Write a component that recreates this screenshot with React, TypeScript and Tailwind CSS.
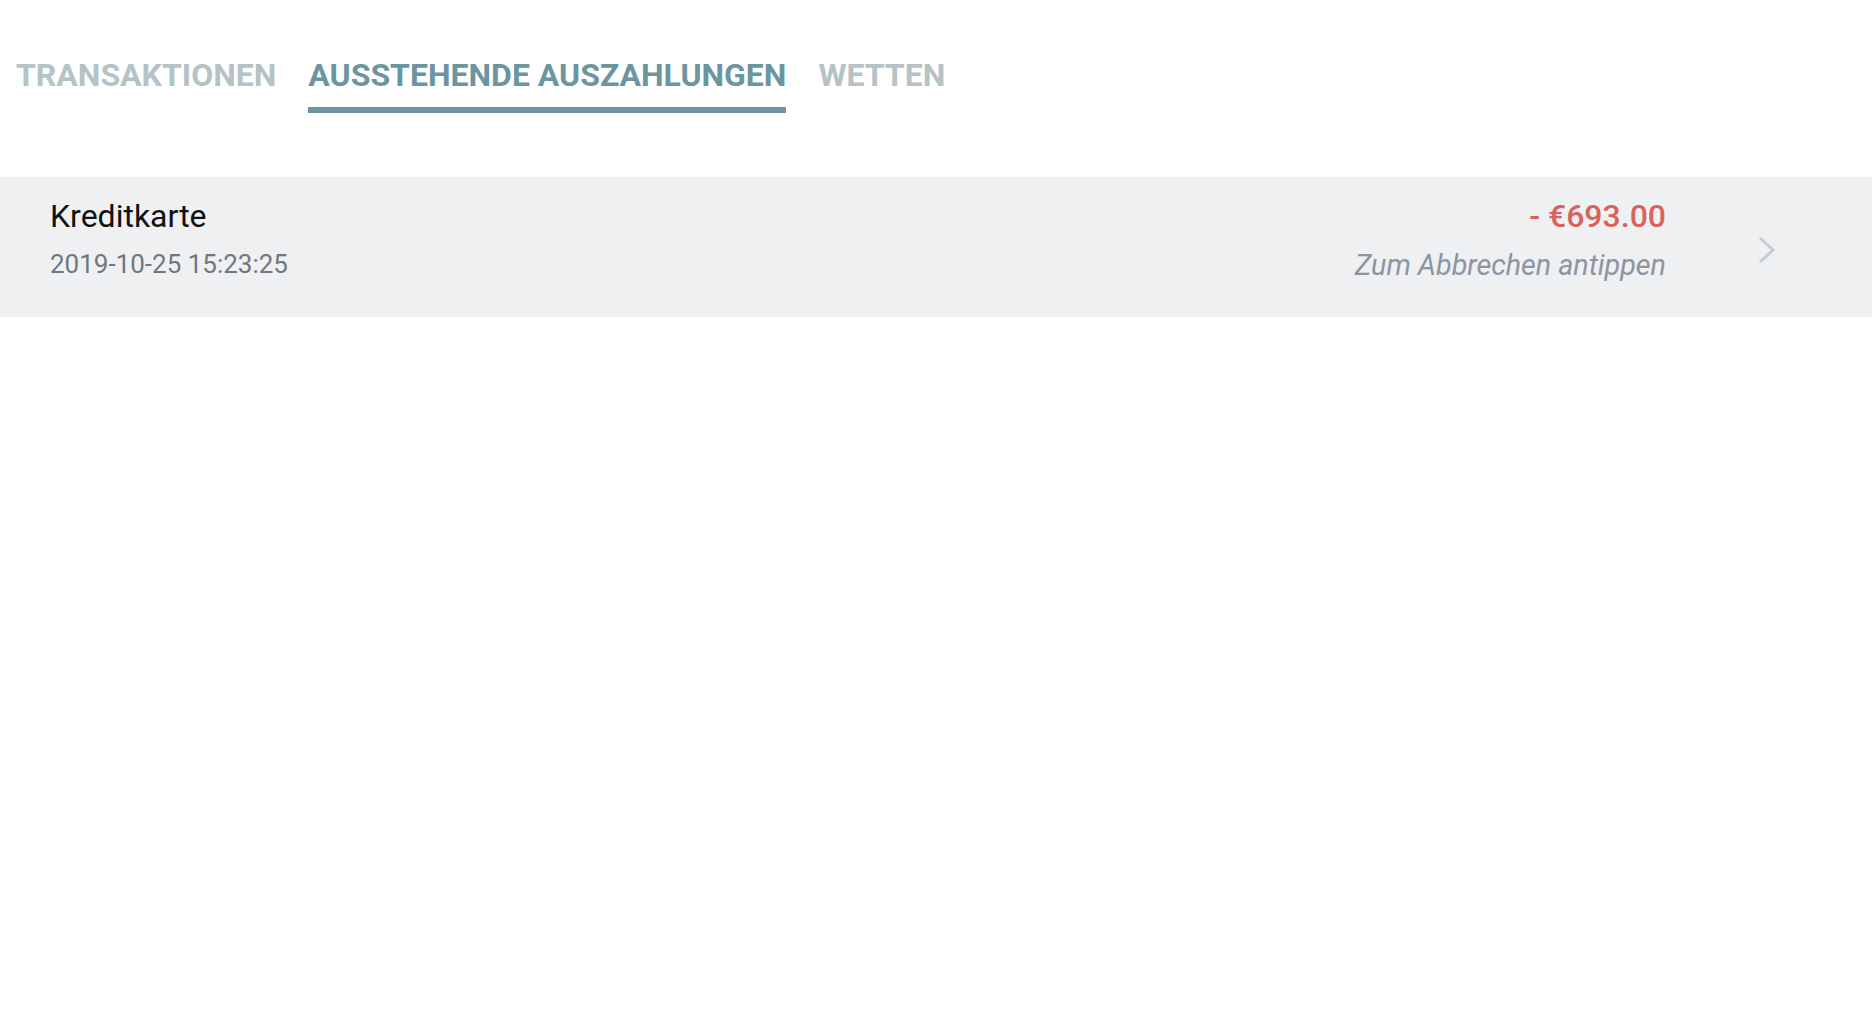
import React from 'react';

const tabs = [
  { label: 'TRANSAKTIONEN', active: false },
  { label: 'AUSSTEHENDE AUSZAHLUNGEN', active: true },
  { label: 'WETTEN', active: false },
];

const payouts = [
  { method: 'Kreditkarte', date: '2019-10-25 15:23:25', amount: '- €693.00' },
];

export default function App() {
  return (
    <div className="min-h-screen bg-white font-['Roboto',sans-serif]">
      {/* Tabs */}
      <div className="flex gap-[32px] pl-[16px] pt-[56px]">
        {tabs.map((t) => (
          <div
            key={t.label}
            className={`pb-[13px] text-[32px] font-bold leading-[38px] ${
              t.active ? 'border-b-[6px] border-[#6b95a1] text-[#6b95a1]' : 'border-b-[6px] border-transparent text-[#b5c2c6]'
            }`}
          >
            {t.label}
          </div>
        ))}
      </div>

      {/* Pending payouts */}
      <div className="mt-[64px]">
        {payouts.map((p) => (
          <div key={p.date} className="flex h-[140px] bg-[#eff0f2] pl-[50px]">
            <div className="flex-1 pt-[21px]">
              <div className="text-[32px] leading-[37px] text-[#111111]">{p.method}</div>
              <div className="mt-[14px] text-[26px] leading-[31px] text-[#6f7781]">{p.date}</div>
            </div>
            <div className="pt-[21px] text-right">
              <div className="text-[32px] font-medium leading-[36px] text-[#d9625e]">{p.amount}</div>
              <div className="mt-[14px] text-[28.7px] italic leading-[35px] text-[#8a96a3]">Zum Abbrechen antippen</div>
            </div>
            <div className="ml-[92px] mr-[96px] flex items-center pt-[6px]">
              <svg width="18" height="28" viewBox="0 0 18 28" fill="none">
                <polyline points="2,2 15,14 2,26" stroke="#c5ccd3" strokeWidth="3" />
              </svg>
            </div>
          </div>
        ))}
      </div>
    </div>
  );
}
